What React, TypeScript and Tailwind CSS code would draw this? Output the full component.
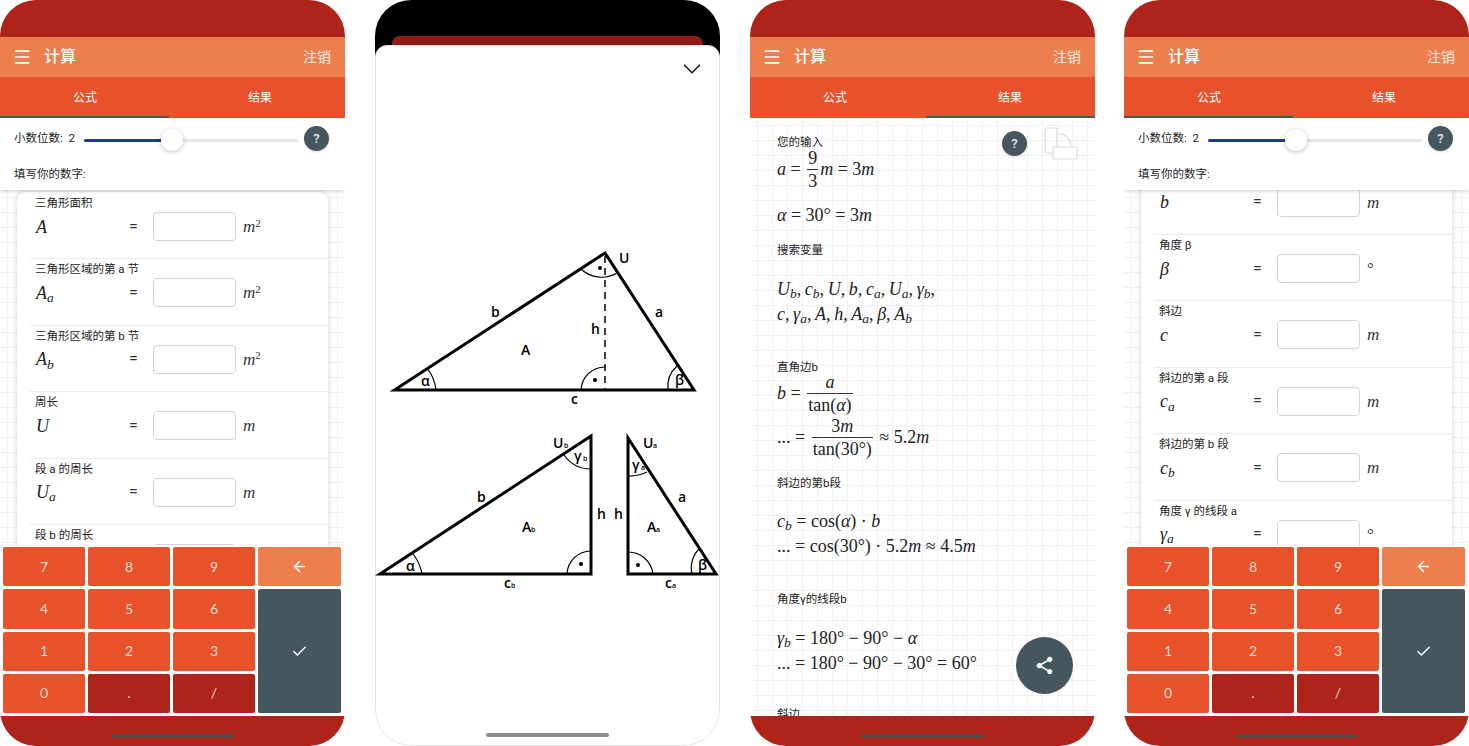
import type { ReactNode } from "react";
import { ArrowLeft, Check, ChevronDown, Menu } from "lucide-react";
import { MdShare } from "react-icons/md";

const mathFont = "font-['Liberation_Serif',serif]";
const gridBg =
  "bg-white bg-[linear-gradient(#f1f1f1_1px,transparent_1px),linear-gradient(90deg,#f1f1f1_1px,transparent_1px)] bg-[size:15px_15px] bg-[position:7px_7px]";

function HomeBar({ color = "bg-[#5f4744]" }: { color?: string }) {
  return <div className={`h-1 w-[123px] rounded-full ${color}`} />;
}

function BottomBar() {
  return (
    <div className="flex h-[30px] shrink-0 items-end justify-center bg-[#ae231a] pb-2">
      <HomeBar />
    </div>
  );
}

function HelpDot() {
  return (
    <div className="flex h-[25px] w-[25px] items-center justify-center rounded-full bg-[#46565e] text-[13px] font-medium text-[#e8e8e8] shadow-sm">
      ?
    </div>
  );
}

function AppHeader({ activeTab }: { activeTab: 0 | 1 }) {
  return (
    <>
      <div className="h-[37px] shrink-0 bg-[#ae231a]" />
      <div className="flex h-[40px] shrink-0 items-center bg-[#ec7f4d] pl-3 pr-[14px] text-white">
        <Menu className="h-[20px] w-[20px]" strokeWidth={2} />
        <span className="ml-3 text-base font-medium">计算</span>
        <span className="ml-auto text-sm text-white/85">注销</span>
      </div>
      <div className="flex h-[41px] shrink-0 flex-col bg-[#e8522a] text-xs text-white">
        <div className="flex flex-1 items-center pt-[3px]">
          <div className="w-[170px] text-center">公式</div>
          <div className="flex-1 pl-[5px] text-center">结果</div>
        </div>
        <div className={`h-[2px] w-[169px] bg-[#4a5860] ${activeTab === 1 ? "ml-[176px]" : ""}`} />
      </div>
    </>
  );
}

function DecimalsPanel() {
  return (
    <div className="relative z-10 flex h-[72px] shrink-0 flex-col bg-white pl-[14px] pr-4 text-[11.5px] text-[#222] shadow-[0_1px_4px_rgba(0,0,0,0.2)]">
      <div className="mt-2 flex h-[25px] items-center">
        <span className="w-[70px] shrink-0">小数位数:&nbsp;&nbsp;2</span>
        <div className="mt-[3px] flex w-[214px] items-center">
          <div className="h-[3px] w-[88px] rounded-l-full bg-[#1c3a8f]" />
          <div className="relative z-10 -mx-[11px] h-[22px] w-[22px] shrink-0 rounded-full bg-white shadow-[0_1px_5px_rgba(0,0,0,0.25)]" />
          <div className="h-[3px] flex-1 rounded-r-full bg-[#e6e6e6]" />
        </div>
        <div className="ml-auto">
          <HelpDot />
        </div>
      </div>
      <div className="mt-4 flex h-4 items-center">填写你的数字:</div>
    </div>
  );
}

// a row cut off by the keypad only shows its label and the top of the input
type Field = { label?: string; symbol?: ReactNode; unit?: ReactNode };

const unitM = <i>m</i>;
const unitM2 = (
  <>
    <i>m</i>
    <sup className="text-[11px]">2</sup>
  </>
);

const firstFields: Field[] = [
  { label: "三角形面积", symbol: <i>A</i>, unit: unitM2 },
  { label: "三角形区域的第 a 节", symbol: <><i>A</i><sub><i>a</i></sub></>, unit: unitM2 },
  { label: "三角形区域的第 b 节", symbol: <><i>A</i><sub><i>b</i></sub></>, unit: unitM2 },
  { label: "周长", symbol: <i>U</i>, unit: unitM },
  { label: "段 a 的周长", symbol: <><i>U</i><sub><i>a</i></sub></>, unit: unitM },
  { label: "段 b 的周长" },
];

const scrolledFields: Field[] = [
  { symbol: <i>b</i>, unit: unitM },
  { label: "角度 β", symbol: <i>β</i>, unit: "°" },
  { label: "斜边", symbol: <i>c</i>, unit: unitM },
  { label: "斜边的第 a 段", symbol: <><i>c</i><sub><i>a</i></sub></>, unit: unitM },
  { label: "斜边的第 b 段", symbol: <><i>c</i><sub><i>b</i></sub></>, unit: unitM },
  { label: "角度 γ 的线段 a", symbol: <><i>γ</i><sub><i>a</i></sub></>, unit: "°" },
];

function FieldRow({ field }: { field: Field }) {
  return (
    <div className="h-[66.4px] shrink-0 border-b border-[#ececec] pl-[6px] pt-[2px]">
      <div className="-ml-px h-4 text-[11.5px] leading-4 text-[#222]">{field.label}</div>
      <div className="mt-px flex items-center">
        <div className={`w-[93px] text-[18px] leading-none text-[#222] ${mathFont}`}>{field.symbol}</div>
        <div className="w-[24px] text-base text-[#333]">{field.symbol ? "=" : ""}</div>
        <div className="h-[29px] w-[83px] rounded border border-[#d4d4d4] bg-white" />
        <div className={`ml-[7px] text-[17px] leading-none text-[#333] ${mathFont}`}>{field.unit}</div>
      </div>
    </div>
  );
}

const keys = ["7", "8", "9"];

function Key({ children, dark }: { children: ReactNode; dark?: boolean }) {
  return (
    <div
      className={`flex items-center justify-center rounded-[2px] text-sm text-[#fbdccf] font-['Lato',sans-serif] ${
        dark ? "bg-[#ae231a]" : "bg-[#e8522a]"
      }`}
    >
      {children}
    </div>
  );
}

function Keypad() {
  return (
    <div className="relative z-10 grid h-[170px] shrink-0 grid-cols-[82px_82px_82px_83px] grid-rows-4 gap-[3px] bg-white pb-[3px] pl-[3px] pt-px">
      {keys.map((k) => (
        <Key key={k}>{k}</Key>
      ))}
      <div className="flex items-center justify-center rounded-[2px] bg-[#ec7f4d] text-white">
        <ArrowLeft className="h-[17px] w-[17px]" />
      </div>
      <Key>4</Key>
      <Key>5</Key>
      <Key>6</Key>
      <div className="row-span-3 flex items-center justify-center rounded-[2px] bg-[#46565e] text-white">
        <Check className="h-[17px] w-[17px]" />
      </div>
      <Key>1</Key>
      <Key>2</Key>
      <Key>3</Key>
      <Key>0</Key>
      <Key dark>.</Key>
      <Key dark>/</Key>
    </div>
  );
}

function InputPhone({ fields, scrolled, className = "" }: { fields: Field[]; scrolled?: boolean; className?: string }) {
  return (
    <div className={`flex h-[746px] w-[345px] shrink-0 flex-col overflow-hidden rounded-[36px] bg-white ${className}`}>
      <AppHeader activeTab={0} />
      <DecimalsPanel />
      <div className={`min-h-0 flex-1 overflow-hidden ${gridBg}`}>
        <div
          className={`ml-[17px] w-[311px] rounded-lg bg-white pl-[13px] shadow-[0_0_5px_rgba(0,0,0,0.2)] ${
            scrolled ? "-mt-[21.4px]" : "mt-[2px] pt-px"
          }`}
        >
          {fields.map((f, i) => (
            <FieldRow key={i} field={f} />
          ))}
        </div>
      </div>
      <Keypad />
      <BottomBar />
    </div>
  );
}

function DiagramPhone() {
  const stroke = { stroke: "#000", strokeWidth: 3, fill: "none", strokeLinejoin: "miter" as const };
  const arc = { stroke: "#000", strokeWidth: 1.2, fill: "none" };
  const label = "fill-black font-['Open_Sans',sans-serif] text-[14px] font-semibold";
  const small = "fill-black font-['Open_Sans',sans-serif] text-[7px] font-semibold";
  return (
    <div className="flex h-[746px] w-[345px] shrink-0 flex-col overflow-hidden rounded-[36px]">
      <div className="-mb-3 flex h-[57px] shrink-0 items-end justify-center bg-black pb-3">
        <div className="h-[9px] w-[311px] rounded-t-lg bg-[#8f1d15]" />
      </div>
      <div className="relative flex min-h-0 flex-1 flex-col items-center rounded-b-[36px] rounded-t-xl border border-[#e3e3e3] bg-white">
        <div className="flex w-full justify-end pr-3 pt-2">
          <ChevronDown className="h-[30px] w-[30px] text-[#222]" strokeWidth={1.4} />
        </div>
        <svg className="mt-[161px] shrink-0" width={345} height={345} viewBox="375 245 345 345">
          <path d="M394.5 390 L605 253 L694 390 Z" {...stroke} />
          <path d="M605 256 V390" stroke="#000" strokeWidth={1.5} strokeDasharray="7 5" fill="none" />
          <path d="M436 390 A43 43 0 0 0 427 368" {...arc} />
          <path d="M580 268 A30 30 0 0 0 617 273" {...arc} />
          <path d="M581 390 A24 24 0 0 1 605 367" {...arc} />
          <path d="M668 390 A28 28 0 0 1 677 366" {...arc} />
          <circle cx={600} cy={268} r={2} />
          <circle cx={595} cy={380} r={2} />
          <text x={619} y={263} className={label}>U</text>
          <text x={491} y={317} className={label}>b</text>
          <text x={655} y={317} className={label}>a</text>
          <text x={591} y={334} className={label}>h</text>
          <text x={521} y={355} className={label}>A</text>
          <text x={571} y={404} className={label}>c</text>
          <text x={421} y={386} className={label}>α</text>
          <text x={675} y={385} className={label}>β</text>

          <path d="M380 574 L591 436 V574 Z" {...stroke} />
          <path d="M422 574 A44 44 0 0 0 413 554" {...arc} />
          <path d="M564 455 A33 33 0 0 0 591 469" {...arc} />
          <path d="M567 574 A24 24 0 0 1 591 551" {...arc} />
          <circle cx={581} cy={564} r={2} />
          <text x={553} y={448} className={label}>U</text>
          <text x={564} y={448} className={small}>b</text>
          <text x={574} y={461} className={label}>γ</text>
          <text x={583} y={461} className={small}>b</text>
          <text x={477} y={502} className={label}>b</text>
          <text x={597} y={519} className={label}>h</text>
          <text x={522} y={532} className={label}>A</text>
          <text x={531} y={532} className={small}>b</text>
          <text x={504} y={588} className={label}>c</text>
          <text x={511} y={588} className={small}>b</text>
          <text x={406} y={571} className={label}>α</text>

          <path d="M628 438 V574 H716 Z" {...stroke} />
          <path d="M653 574 A25 25 0 0 0 628 552" {...arc} />
          <path d="M692 574 A27 27 0 0 1 700 548" {...arc} />
          <path d="M628 476 A40 40 0 0 0 647 472" {...arc} />
          <circle cx={638} cy={565} r={2} />
          <text x={643} y={448} className={label}>U</text>
          <text x={653} y={448} className={small}>a</text>
          <text x={632} y={470} className={label}>γ</text>
          <text x={641} y={470} className={small}>a</text>
          <text x={678} y={502} className={label}>a</text>
          <text x={614} y={519} className={label}>h</text>
          <text x={647} y={532} className={label}>A</text>
          <text x={656} y={532} className={small}>a</text>
          <text x={665} y={588} className={label}>c</text>
          <text x={672} y={588} className={small}>a</text>
          <text x={698} y={570} className={label}>β</text>
        </svg>
        <div className="mb-[8px] mt-auto">
          <HomeBar color="bg-[#8c8c8c]" />
        </div>
      </div>
    </div>
  );
}

function Label({ className, children }: { className: string; children: ReactNode }) {
  return <div className={`h-4 text-[11.5px] leading-4 text-[#222] ${className}`}>{children}</div>;
}

function MathLine({ className = "", children }: { className?: string; children: ReactNode }) {
  return (
    <div className={`flex h-6 items-center whitespace-pre text-[18px] leading-none text-[#222] ${mathFont} ${className}`}>
      <span className="flex items-center whitespace-pre">{children}</span>
    </div>
  );
}

function Frac({ top, bottom }: { top: ReactNode; bottom: ReactNode }) {
  return (
    <span className="mx-[2px] inline-flex flex-col items-center leading-[22px]">
      <span className="px-px">{top}</span>
      <span className="w-full border-t border-[#333] px-px text-center">{bottom}</span>
    </span>
  );
}

function ResultPhone() {
  return (
    <div className="flex h-[746px] w-[345px] shrink-0 flex-col overflow-hidden rounded-[36px] bg-white">
      <AppHeader activeTab={1} />
      <div className={`relative min-h-0 flex-1 overflow-hidden pl-[27px] pt-4 ${gridBg}`}>
        <div className="absolute right-[17px] top-[9px] flex items-start gap-[17px]">
          <div className="mt-1">
            <HelpDot />
          </div>
          <svg width={34} height={33} viewBox="0 0 34 33" fill="none" stroke="#dcdcdc" strokeWidth={1.2}>
            <rect x={1} y={1} width={12} height={25} rx={1.5} />
            <rect x={9} y={20} width={24} height={12} rx={1.5} fill="#fff" />
            <path d="M15 7 C22 7 26 12 27 19" />
          </svg>
        </div>

        <Label className="">您的输入</Label>
        <MathLine className="h-[38px]">
          <i>a</i> = <Frac top="9" bottom="3" /><i>m</i> = 3<i>m</i>
        </MathLine>
        <MathLine className="mt-[15px]">
          <i>α</i> = 30° = 3<i>m</i>
        </MathLine>
        <Label className="mt-[15px]">搜索变量</Label>
        <MathLine className="mt-[19px]">
          <span><i>U</i><sub><i>b</i></sub>,{"\u2009"}<i>c</i><sub><i>b</i></sub>,{"\u2009"}<i>U</i>,{"\u2009"}<i>b</i>,{"\u2009"}<i>c</i><sub><i>a</i></sub>,{"\u2009"}<i>U</i><sub><i>a</i></sub>,{"\u2009"}<i>γ</i><sub><i>b</i></sub>,</span>
        </MathLine>
        <MathLine className="mt-px">
          <span><i>c</i>,{"\u2009"}<i>γ</i><sub><i>a</i></sub>,{"\u2009"}<i>A</i>,{"\u2009"}<i>h</i>,{"\u2009"}<i>A</i><sub><i>a</i></sub>,{"\u2009"}<i>β</i>,{"\u2009"}<i>A</i><sub><i>b</i></sub></span>
        </MathLine>
        <Label className="mt-[33px]">直角边b</Label>
        <MathLine className="h-9">
          <i>b</i> = <Frac top={<i>a</i>} bottom={<>tan(<i>α</i>)</>} />
        </MathLine>
        <MathLine className="mt-2 h-9">
          ... = <Frac top={<>3<i>m</i></>} bottom="tan(30°)" /> ≈ 5.2<i>m</i>
        </MathLine>
        <Label className="mt-5">斜边的第b段</Label>
        <MathLine className="mt-[18px]">
          <span><i>c</i><sub><i>b</i></sub> = cos(<i>α</i>) · <i>b</i></span>
        </MathLine>
        <MathLine className="mt-px">
          <span>... = cos(30°) · 5.2<i>m</i> ≈ 4.5<i>m</i></span>
        </MathLine>
        <Label className="mt-[33px]">角度γ的线段b</Label>
        <MathLine className="mt-[19px]">
          <span><i>γ</i><sub><i>b</i></sub> = 180° − 90° − <i>α</i></span>
        </MathLine>
        <MathLine className="mt-px">
          <span>... = 180° − 90° − 30° = 60°</span>
        </MathLine>
        <Label className="mt-[31px]">斜边</Label>

        <div className="absolute bottom-[22px] right-[22px] flex h-[57px] w-[57px] items-center justify-center rounded-full bg-[#46565e] text-white">
          <MdShare className="h-[21px] w-[21px]" />
        </div>
      </div>
      <BottomBar />
    </div>
  );
}

export default function App() {
  return (
    <div className="flex h-[746px] w-[1469px] gap-[30px] overflow-hidden bg-white font-['Roboto','Noto_Sans_CJK_SC',sans-serif]">
      <InputPhone fields={firstFields} />
      <DiagramPhone />
      <ResultPhone />
      <InputPhone fields={scrolledFields} scrolled className="-ml-px" />
    </div>
  );
}
